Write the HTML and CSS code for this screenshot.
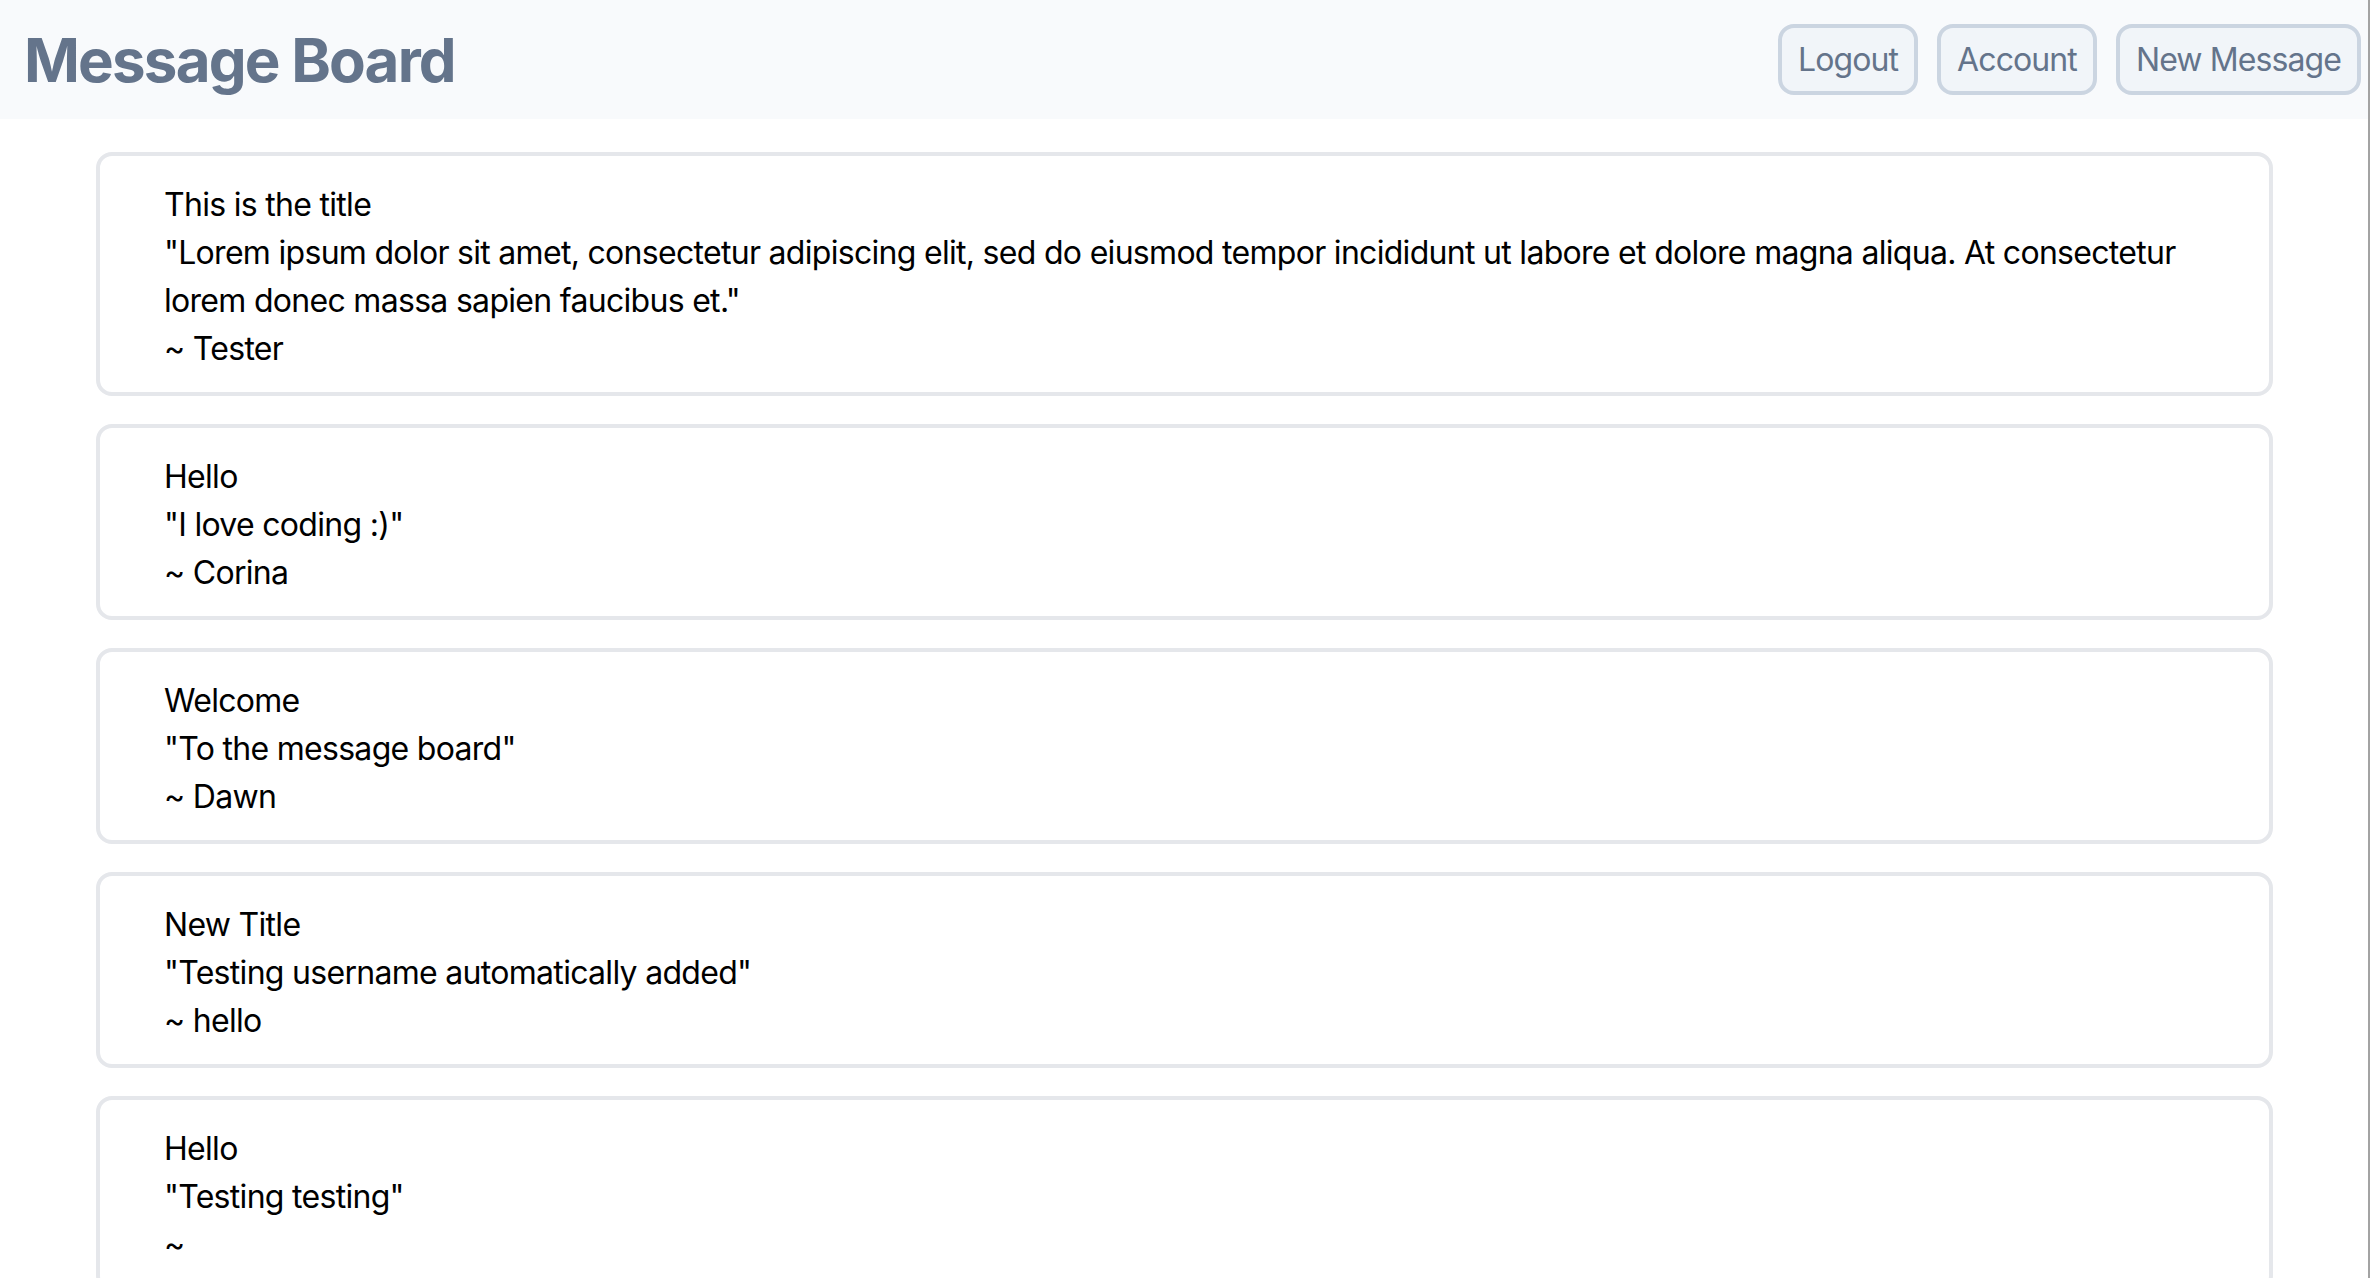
FILE: index.html
```html
<!DOCTYPE html>
<html lang="en">
<head>
<meta charset="utf-8">
<title>Message Board</title>
<link rel="stylesheet" href="styles.css">
</head>
<body>
<div class="page">
  <header class="topbar">
    <h1 class="brand">Message Board</h1>
    <nav class="actions">
      <button class="btn">Logout</button>
      <button class="btn">Account</button>
      <button class="btn">New Message</button>
    </nav>
  </header>
  <main class="board">
    <article class="card">
      <p class="line">This is the title</p>
      <p class="line">"Lorem ipsum dolor sit amet, consectetur adipiscing elit, sed do eiusmod tempor incididunt ut labore et dolore magna aliqua. At consectetur lorem donec massa sapien faucibus et."</p>
      <p class="line">~ Tester</p>
    </article>
    <article class="card">
      <p class="line">Hello</p>
      <p class="line">"I love coding :)"</p>
      <p class="line">~ Corina</p>
    </article>
    <article class="card">
      <p class="line">Welcome</p>
      <p class="line">"To the message board"</p>
      <p class="line">~ Dawn</p>
    </article>
    <article class="card">
      <p class="line">New Title</p>
      <p class="line">"Testing username automatically added"</p>
      <p class="line">~ hello</p>
    </article>
    <article class="card">
      <p class="line">Hello</p>
      <p class="line">"Testing testing"</p>
      <p class="line">~ </p>
    </article>
  </main>
</div>
</body>
</html>
```
FILE: styles.css
```css
html, body {
  margin: 0;
  padding: 0;
  background: #ffffff;
}

body {
  font-family: Inter, "Noto Sans", "Liberation Sans", sans-serif;
  color: #000000;
}

.page {
  width: 2368px;
  min-height: 1278px;
  border-right: 2px solid #a3a3a3;
  box-sizing: content-box;
}

.topbar {
  height: 119px;
  background: #f8fafc;
  display: flex;
  align-items: center;
  justify-content: space-between;
  padding: 0 7px 0 24px;
}

.brand {
  margin: 0;
  font-size: 60px;
  line-height: 72px;
  font-weight: 700;
  color: #64748b;
  letter-spacing: -1.8px;
}

.actions {
  display: flex;
  gap: 19px;
  align-items: center;
}

.btn {
  font-family: Inter, "Noto Sans", "Liberation Sans", sans-serif;
  font-size: 32px;
  line-height: 48px;
  letter-spacing: -0.9px;
  color: #64748b;
  background: #f1f5f9;
  border: 4px solid #cbd5e1;
  border-radius: 16px;
  padding: 8px 16px 7px;
  margin: 0;
  cursor: pointer;
}

.board {
  display: flex;
  flex-direction: column;
  gap: 28px;
  padding: 33px 95px 40px 96px;
}

.card {
  border: 4px solid #e5e7eb;
  border-radius: 16px;
  padding: 25px 64px 19px;
}

.line {
  margin: 0;
  font-size: 32px;
  line-height: 48px;
  letter-spacing: -0.7px;
}
```
